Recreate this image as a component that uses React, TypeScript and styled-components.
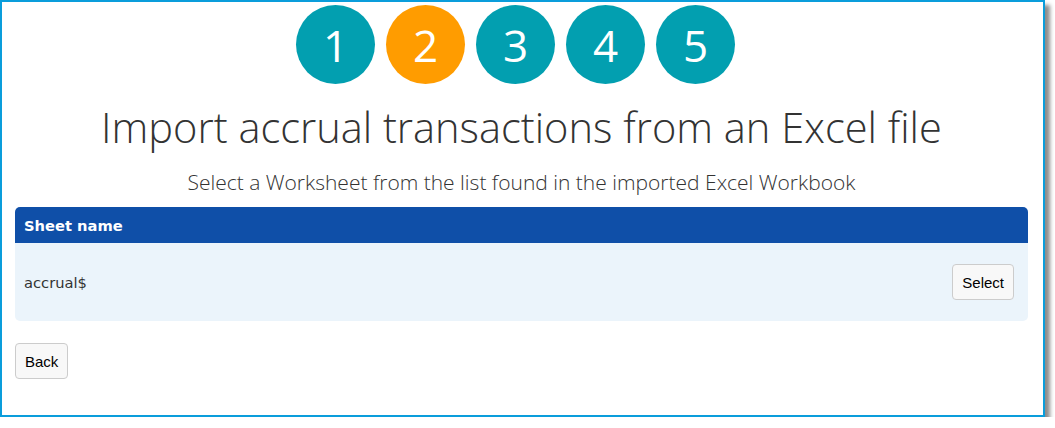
import React from "react";
import styled, { createGlobalStyle } from "styled-components";

const Global = createGlobalStyle`
  html, body { margin: 0; padding: 0; background: #ffffff; }
  * { box-sizing: border-box; }
`;

const Frame = styled.div`
  width: 1045px;
  height: 417px;
  border: 2px solid #0a9ddb;
  background: #ffffff;
  box-shadow: 5px 5px 4px rgba(0, 0, 0, 0.45);
  padding: 3px 15px 0 13px;
  display: flex;
  flex-direction: column;
`;

const Steps = styled.div`
  display: flex;
  justify-content: center;
  gap: 11px;
  padding-right: 12px;
`;

const Step = styled.div<{ $active?: boolean }>`
  width: 79px;
  height: 79px;
  border-radius: 50%;
  background: ${(p) => (p.$active ? "#ff9c00" : "#029fb0")};
  color: #ffffff;
  display: flex;
  align-items: center;
  justify-content: center;
  font-family: "Open Sans", "Noto Sans", sans-serif;
  font-weight: 400;
  font-size: 44px;
  line-height: 1;
`;

const Title = styled.h1`
  margin: 17px 0 0 0;
  font-family: "Open Sans", "Noto Sans", sans-serif;
  font-weight: 300;
  font-size: 41.6px;
  line-height: 52px;
  color: #333333;
  text-align: center;
`;

const Subtitle = styled.p`
  margin: 16px 0 0 0;
  font-family: "Open Sans", "Noto Sans", sans-serif;
  font-weight: 300;
  font-size: 21px;
  line-height: 26px;
  color: #333333;
  text-align: center;
`;

const Table = styled.div`
  margin-top: 12px;
  border-radius: 5px;
  overflow: hidden;
  display: flex;
  flex-direction: column;
`;

const HeaderRow = styled.div`
  height: 36px;
  background: #0f4fa8;
  color: #ffffff;
  display: flex;
  align-items: center;
  padding: 0 9px;
  font-family: "DejaVu Sans", Verdana, sans-serif;
  font-weight: 700;
  font-size: 14.7px;
`;

const BodyRow = styled.div`
  height: 78px;
  background: #ebf4fb;
  display: flex;
  align-items: center;
  justify-content: space-between;
  padding: 0 14px 0 9px;
  font-family: "DejaVu Sans", Verdana, sans-serif;
  font-size: 14.7px;
  color: #333333;
`;

const Button = styled.button`
  height: 36px;
  padding: 0 9px;
  background: #f8f8f8;
  border: 1px solid #cccccc;
  border-radius: 4px;
  font-family: "Liberation Sans", Arial, sans-serif;
  font-size: 15px;
  color: #000000;
`;

const Footer = styled.div`
  margin-top: 22px;
  display: flex;
`;

export default function App() {
  return (
    <>
      <Global />
      <Frame>
        <Steps>
          {[1, 2, 3, 4, 5].map((n) => (
            <Step key={n} $active={n === 2}>
              {n}
            </Step>
          ))}
        </Steps>
        <Title>Import accrual transactions from an Excel file</Title>
        <Subtitle>Select a Worksheet from the list found in the imported Excel Workbook</Subtitle>
        <Table>
          <HeaderRow>Sheet name</HeaderRow>
          <BodyRow>
            <span>accrual$</span>
            <Button>Select</Button>
          </BodyRow>
        </Table>
        <Footer>
          <Button>Back</Button>
        </Footer>
      </Frame>
    </>
  );
}
